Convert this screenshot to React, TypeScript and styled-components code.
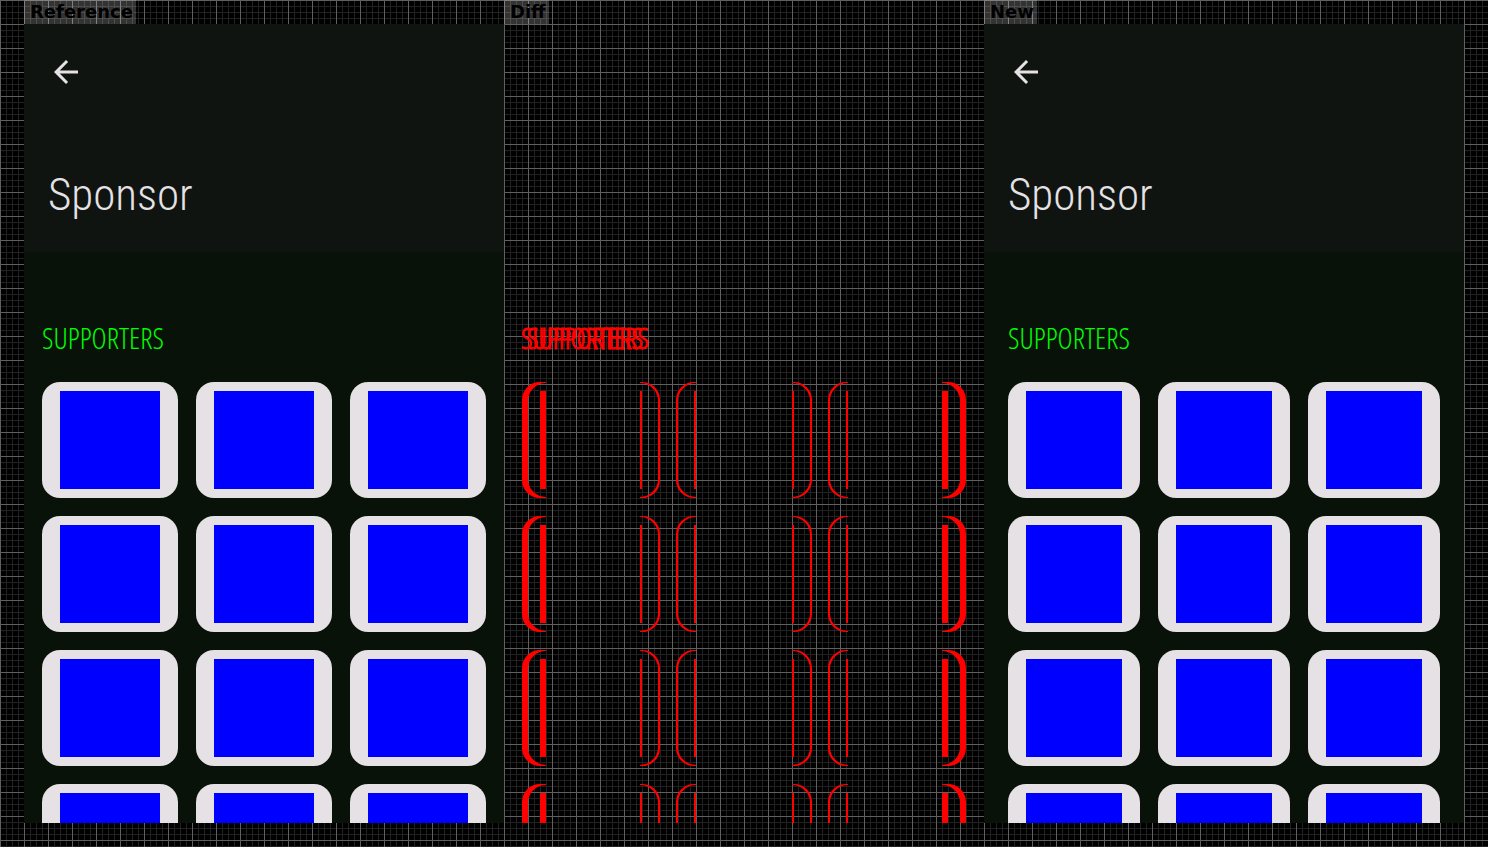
import React from 'react';
import styled, { createGlobalStyle } from 'styled-components';

const GlobalStyle = createGlobalStyle`
  *, *::before, *::after { box-sizing: border-box; }
  body {
    margin: 0;
    background-color: #000;
    background-image:
      linear-gradient(#606060 1px, transparent 1px),
      linear-gradient(90deg, #606060 1px, transparent 1px),
      linear-gradient(#222 1px, transparent 1px),
      linear-gradient(90deg, #222 1px, transparent 1px);
    background-size: 24px 24px, 24px 24px, 6px 6px, 6px 6px;
    overflow: hidden;
  }
`;

const Board = styled.main`
  display: grid;
  grid-template-columns: repeat(3, 1fr);
  height: 100vh;
  padding: 0 24px 24px;
`;

const Column = styled.section`
  display: flex;
  flex-direction: column;
  align-items: flex-start;
  min-width: 0;
  min-height: 0;
`;

const Label = styled.h2`
  flex: none;
  height: 24px;
  margin: 0;
  padding: 0 3px 0 6px;
  background: rgba(255, 255, 255, 0.2);
  color: #000;
  font: bold 18px/24px "DejaVu Sans", sans-serif;
`;

const Screen = styled.div`
  flex: 1;
  align-self: stretch;
  min-height: 0;
  overflow: hidden;
  background: #081208;
`;

const AppBar = styled.header`
  display: flex;
  flex-direction: column;
  align-items: flex-start;
  gap: 75px;
  height: 228px;
  padding: 30px 24px 0;
  background: #101411;
`;

const BackButton = styled.button`
  display: flex;
  padding: 0;
  border: 0;
  background: none;
  color: #e5e1e5;
`;

const Title = styled.h1`
  margin: 0;
  color: #e5e1e5;
  font: 300 45px/60px "Roboto Condensed", Roboto, sans-serif;
`;

const Body = styled.div<{ $inset: number }>`
  padding: 66px ${p => p.$inset}px 0;
`;

const SectionTitle = styled.h3`
  margin: 0 0 24px;
  color: #00ff00;
  font: 300 29px/40px "Open Sans Condensed Light", "Open Sans", sans-serif;
`;

const CardGrid = styled.ul`
  display: grid;
  grid-template-columns: repeat(3, 1fr);
  gap: 18px;
  margin: 0;
  padding: 0;
  list-style: none;
`;

const Card = styled.li`
  height: 116px;
  padding: 9px 18px;
  border-radius: 18px;
  background: #e5e1e5;
`;

const Avatar = styled.div`
  height: 98px;
  background: #0000ff;
`;

const DiffScreen = styled.div`
  flex: 1;
  align-self: stretch;
  min-height: 0;
  overflow: hidden;
`;

const DiffDrawing = styled.svg`
  display: block;
  fill: #ff0000;
`;

const cards = Array.from({ length: 12 }, (_, i) => i);

const SponsorScreen = ({ inset }: { inset: number }) => (
  <Screen>
    <AppBar>
      <BackButton type="button" aria-label="Back">
        <svg width="36" height="36" viewBox="0 0 24 24" fill="currentColor">
          <path d="M20 11H7.83l5.59-5.59L12 4l-8 8 8 8 1.41-1.41L7.83 13H20v-2z" />
        </svg>
      </BackButton>
      <Title>Sponsor</Title>
    </AppBar>
    <Body $inset={inset}>
      <SectionTitle>SUPPORTERS</SectionTitle>
      <CardGrid>
        {cards.map(i => (
          <Card key={i}>
            <Avatar />
          </Card>
        ))}
      </CardGrid>
    </Body>
  </Screen>
);

const DiffText = styled.text`
  font: 300 29px "Open Sans Condensed Light", "Open Sans", sans-serif;
  stroke: #ff0000;
  stroke-width: 1px;
`;

/* Changed pixels of one row of cards, in the coordinates of the screen. */
const DiffRow = ({ y }: { y: number }) => (
  <g transform={`translate(0 ${y})`}>
    <path d="M42 0H36A18 18 0 0 0 18 18V98A18 18 0 0 0 36 116H42V115A18 18 0 0 1 24 98V18A18 18 0 0 1 42 1Z" />
    <path d="M36 9h6v98h-6zM136 9h2v98h-2zM190 9h2v98h-2zM288 9h2v98h-2zM342 9h2v98h-2zM438 9h6v98h-6z" />
    <path d="M136 0A18 18 0 0 1 156 18V98A18 18 0 0 1 136 116V115A18 18 0 0 0 154 98V18A18 18 0 0 0 136 1Z" />
    <path d="M192 0H190A18 18 0 0 0 172 18V98A18 18 0 0 0 190 116H192V115A18 18 0 0 1 174 98V18A18 18 0 0 1 192 1Z" />
    <path d="M288 0H290A18 18 0 0 1 308 18V98A18 18 0 0 1 290 116H288V115A18 18 0 0 0 306 98V18A18 18 0 0 0 288 1Z" />
    <path d="M344 0H342A18 18 0 0 0 324 18V98A18 18 0 0 0 342 116H344V115A18 18 0 0 1 326 98V18A18 18 0 0 1 344 1Z" />
    <path d="M438 0H444A18 18 0 0 1 462 18V98A18 18 0 0 1 444 116H438V115A18 18 0 0 0 456 98V18A18 18 0 0 0 438 1Z" />
  </g>
);

export default function App() {
  return (
    <>
      <GlobalStyle />
      <Board>
        <Column>
          <Label>Reference</Label>
          <SponsorScreen inset={18} />
        </Column>
        <Column>
          <Label>Diff</Label>
          <DiffScreen>
            <DiffDrawing width="480" height="799" viewBox="0 0 480 799">
              <DiffText x="17" y="325">SUPPORTERS</DiffText>
              <DiffText x="23" y="325" aria-hidden="true">SUPPORTERS</DiffText>
              {[358, 492, 626, 760].map(y => (
                <DiffRow key={y} y={y} />
              ))}
            </DiffDrawing>
          </DiffScreen>
        </Column>
        <Column>
          <Label>New</Label>
          <SponsorScreen inset={24} />
        </Column>
      </Board>
    </>
  );
}
